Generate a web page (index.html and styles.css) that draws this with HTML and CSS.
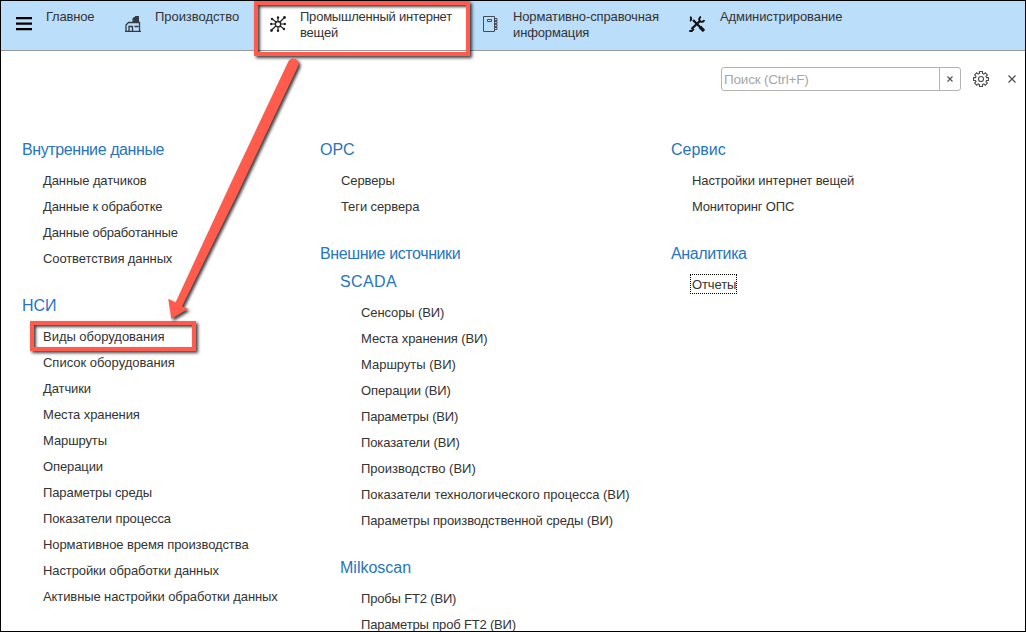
FILE: index.html
```html
<!DOCTYPE html>
<html lang="ru">
<head>
<meta charset="utf-8">
<title>Промышленный интернет вещей</title>
<link rel="stylesheet" href="styles.css">
</head>
<body>
<div class="app">
  <nav class="sections">
    <a class="section main"><svg class="icon" viewBox="0 0 16 16"><path d="M0 1h16v2.200H0zM0 6.500h16v2.200H0zM0 12h16v2.200H0z"/></svg><span>Главное</span></a>
    <a class="section production"><svg class="icon" viewBox="0 0 16 16" fill="none" stroke="#333b43"><path d="M1 15V9L3.500 6.500H14.500V15M0 15.300h16M4 15v-4.500h3.500V15M4 10.500h2M9.500 10.500H13.500" stroke-width="1.300"/><path d="M7.500 2h1V1H10v1h-1 1V0h4v6.500H7.500z" fill="#333b43" stroke="none"/></svg><span>Производство</span></a>
    <a class="section iot"><svg class="icon" viewBox="0 0 16 16" fill="none" stroke="#222"><circle cx="8" cy="8.200" r="2.700" stroke-width="1.400"/><path d="M8 5.500V2M8 11V14M5.500 8H2M10.500 8H14M6 6L2 2.800M10 6l4-4M6 10l-4.500 4M10 10l4 3" stroke-width="1.200"/><g fill="#222" stroke="none"><circle cx="8" cy="1.500" r="1.200"/><circle cx="8" cy="14.700" r="1.200"/><circle cx="1.200" cy="8" r="1.200"/><circle cx="14.800" cy="8" r="1.200"/><circle cx="2" cy="3" r="1.200"/><circle cx="14.500" cy="1.500" r="1.400"/><circle cx="1.500" cy="14.500" r="1.400"/><circle cx="14" cy="13" r="1.200"/></g></svg><span>Промышленный интернет<br>вещей</span></a>
    <a class="section reference"><svg class="icon" viewBox="0 0 16 16" fill="none" stroke="#454c54"><path d="M1.500 .500h11v15h-11z"/><path d="M5.500 3.500h4v2h-4z"/><path d="M13 2.500h2v2h-2M13 5.500h2v2h-2M13 8.500h2v2h-2M13 11.500h2v2h-2"/></svg><span>Нормативно-справочная<br>информация</span></a>
    <a class="section admin"><svg class="icon" viewBox="0 0 16 16" fill="none" stroke="#111"><path d="M4 4l8 8M11.500 4.500L2.500 13" stroke-width="2.300"/><path d="M11 11l4 4" stroke-width="3.200"/><path d="M12 .8A2.600 2.600 0 1 0 15.300 4M1.200 .8A2.600 2.600 0 0 1 1 5M.3 15h2.500l2-2.200" stroke-width="1.900"/></svg><span>Администрирование</span></a>
  </nav>

  <div class="tools">
    <div class="search"><span class="hint">Поиск (Ctrl+F)</span><span class="clear"><svg viewBox="0 0 6 6"><path d="M.5 .5l5 5M5.500 .5l-5 5"/></svg></span></div>
    <svg class="gear" viewBox="0 0 16 16"><path d="M6.500 .500h3v2l1.300.6 1.500-1.300 2.100 2.100L13 5.400l.5 1.200h2v2.900h-2L13 10.700l1.400 1.400-2.100 2.100-1.500-1.300-1.300.6v2h-3v-2l-1.300-.6-1.500 1.300-2.100-2.100L3 10.700l-.5-1.200h-2V6.600h2L3 5.400 1.600 3.900l2.100-2.100 1.500 1.300 1.300-.6z"/><circle cx="8" cy="8" r="2.500"/></svg>
    <svg class="close" viewBox="0 0 8 8"><path d="M.5 .5l7 7M7.500 .5l-7 7"/></svg>
  </div>

  <main class="columns">
    <div class="column">
      <section><h2 class="dense">Внутренние данные</h2>
        <ul><li>Данные датчиков</li><li class="dense">Данные к обработке</li><li class="dense">Данные обработанные</li><li>Соответствия данных</li></ul></section>
      <section><h2>НСИ</h2>
        <ul><li class="even">Виды оборудования</li><li class="even">Список оборудования</li><li>Датчики</li><li>Места хранения</li><li>Маршруты</li><li>Операции</li><li>Параметры среды</li><li>Показатели процесса</li><li>Нормативное время производства</li><li>Настройки обработки данных</li><li>Активные настройки обработки данных</li></ul></section>
    </div>
    <div class="column">
      <section><h2>OPC</h2>
        <ul><li>Серверы</li><li>Теги сервера</li></ul></section>
      <section><h2 class="parent dense">Внешние источники</h2>
        <div class="nested">
          <section><h2 class="loose">SCADA</h2>
            <ul><li>Сенсоры (ВИ)</li><li>Места хранения (ВИ)</li><li class="even">Маршруты (ВИ)</li><li>Операции (ВИ)</li><li class="dense">Параметры (ВИ)</li><li>Показатели (ВИ)</li><li class="even">Производство (ВИ)</li><li class="even">Показатели технологического процесса (ВИ)</li><li>Параметры производственной среды (ВИ)</li></ul></section>
          <section><h2>Milkoscan</h2>
            <ul><li class="dense">Пробы FT2 (ВИ)</li><li class="dense">Параметры проб FT2 (ВИ)</li></ul></section>
        </div></section>
    </div>
    <div class="column">
      <section><h2>Сервис</h2>
        <ul><li>Настройки интернет вещей</li><li class="dense">Мониторинг ОПС</li></ul></section>
      <section><h2 class="dense">Аналитика</h2>
        <ul><li><span class="focused">Отчеты</span></li></ul></section>
    </div>
  </main>

  <div class="mark mark-section"></div>
  <div class="mark mark-item"></div>
  <svg class="arrow" viewBox="0 0 170 280"><path class="shape" d="M148.300 4.500A5.300 5.300 0 0 1 158 9.200L98 136L42 249.500L48 251.800L31.300 262L28.300 241.800L35.500 245.500L89 130Z"/></svg>
</div>
</body>
</html>
```
FILE: styles.css
```css
* { box-sizing: border-box; }
body { margin: 0; font: 13px/16px "Liberation Sans", Arial, sans-serif; color: #333; background: #fff; }
.app { position: relative; width: 1026px; height: 632px; overflow: hidden; border: 1px solid #000; }
.sections { display: flex; height: 50px; background: #bbdefb; border-bottom: 1px solid #999; }
.section { display: flex; padding: 8px 0 0 15px; white-space: nowrap; letter-spacing: -.1px; }
.icon { width: 16px; height: 16px; margin-top: 7px; flex: none; }
.section span { margin-left: 14px; }
.main { width: 109px; letter-spacing: -.2px; }
.production { width: 148px; letter-spacing: -.05px; }
.iot { width: 209px; padding-left: 12px; background: #fff; letter-spacing: -.22px; }
.reference { width: 207px; letter-spacing: -.13px; }
.reference span { margin-left: 15px; }
.admin { padding-left: 15px; }
.admin span { margin-left: 15px; }
.tools { display: flex; align-items: center; height: 24px; margin: 16px 9px 0 720px; }
.search { display: flex; width: 240px; height: 24px; border: 1px solid #b3b3b3; border-radius: 3px; }
.hint { flex: 1; padding: 4px 2px; color: #a6a6a6; font-size: 13.5px; letter-spacing: -.2px; }
.clear { display: flex; width: 21px; padding-right: 1px; border-left: 1px solid #b3b3b3; align-items: center; justify-content: center; }
.clear svg { width: 6px; height: 6px; stroke: #555; stroke-width: 1.2; }
.gear { width: 16px; height: 16px; margin-left: 12px; fill: none; stroke: #4d4d4d; stroke-width: 1.15; }
.close { width: 8px; height: 8px; margin-left: auto; stroke: #4d4d4d; stroke-width: 1.2; }
.columns { display: flex; padding: 41px 0 0 21px; }
.column { width: 298px; flex: none; white-space: nowrap; }
.column:nth-child(2) { width: 351px; }
section + section { margin-top: 16px; }
h2 { margin: 0; padding: 8px 0; font-size: 16px; font-weight: 400; line-height: 20px; color: #2675c0; }
h2.dense { letter-spacing: -.4px; }
h2.loose { letter-spacing: .4px; }
h2.parent { padding-bottom: 0; }
.nested { padding-left: 20px; }
ul { margin: 0; padding: 0 0 0 21px; list-style: none; letter-spacing: -.1px; }
li { height: 26px; line-height: 26px; }
li.dense { letter-spacing: -.17px; }
li.even { letter-spacing: -.02px; }
.focused { display: inline-block; height: 20px; margin: 2px 0 0 -2px; padding: 0 0 0 1px; border: 1px dotted #000; line-height: 20px; vertical-align: top; }
.mark { position: absolute; border: 4px solid #ff5c4d; box-shadow: 2px 2px 3px rgba(0,0,0,.75), inset 2px 2px 3px rgba(0,0,0,.75); }
.mark-section { left: 253px; top: 0; width: 216px; height: 55px; }
.mark-item { left: 29px; top: 320px; width: 166px; height: 30px; }
.arrow { position: absolute; left: 139px; top: 56px; width: 170px; height: 280px; filter: drop-shadow(2px 2px 1.5px rgba(0,0,0,.75)); }
.shape { fill: #ff5c4d; }
```
